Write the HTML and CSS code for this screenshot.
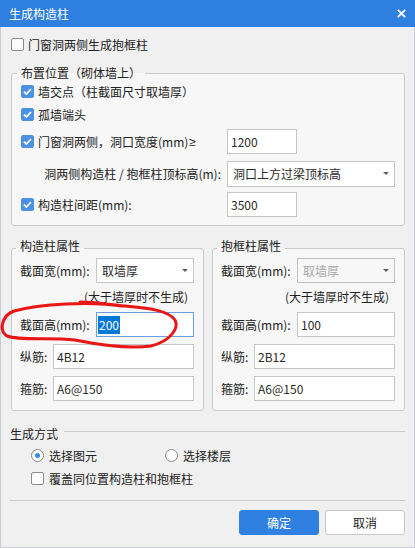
FILE: index.html
```html
<!DOCTYPE html>
<html>
<head>
<meta charset="utf-8">
<title>生成构造柱</title>
<link rel="stylesheet" href="styles.css">
</head>
<body>
<div class="win">
    <div class="titlebar">
        <span class="title">生成构造柱</span>
        <svg class="close" width="9" height="9" viewBox="0 0 9 9"><path d="M0.8 0.8 L8.2 8.2 M8.2 0.8 L0.8 8.2" stroke="#fff" stroke-width="1.8" fill="none"/></svg>
    </div>

    <div class="main">
        <div class="row"><span class="chk"></span>门窗洞两侧生成抱框柱</div>

        <fieldset class="group place">
            <legend>布置位置（砌体墙上）</legend>
            <div class="line">
                <span class="chk on"><svg width="11" height="11" viewBox="0 0 11 11"><path d="M2 5.6 L4.4 8 L9 3" stroke="#fff" stroke-width="1.8" fill="none"/></svg></span>墙交点（柱截面尺寸取墙厚）
            </div>
            <div class="line mt3">
                <span class="chk on"><svg width="11" height="11" viewBox="0 0 11 11"><path d="M2 5.6 L4.4 8 L9 3" stroke="#fff" stroke-width="1.8" fill="none"/></svg></span>孤墙端头
            </div>
            <div class="line tall mt5">
                <div class="lbl"><span class="chk on"><svg width="11" height="11" viewBox="0 0 11 11"><path d="M2 5.6 L4.4 8 L9 3" stroke="#fff" stroke-width="1.8" fill="none"/></svg></span>门窗洞两侧，洞口宽度(mm)<span class="ge">≥</span></div>
                <div class="field w70">1200</div>
            </div>
            <div class="line tall mt7">
                <div class="lbl right">洞两侧构造柱 / 抱框柱顶标高(m):</div>
                <div class="field select wide"><span>洞口上方过梁顶标高</span><i class="arrow"></i></div>
            </div>
            <div class="line tall mt6">
                <div class="lbl"><span class="chk on"><svg width="11" height="11" viewBox="0 0 11 11"><path d="M2 5.6 L4.4 8 L9 3" stroke="#fff" stroke-width="1.8" fill="none"/></svg></span>构造柱间距(mm):</div>
                <div class="field w70">3500</div>
            </div>
        </fieldset>

        <div class="pair">
            <fieldset class="group prop">
                <legend>构造柱属性</legend>
                <div class="prow">
                    <span class="plbl">截面宽(mm):</span>
                    <div class="field select"><span>取墙厚</span><i class="arrow"></i></div>
                </div>
                <div class="note">(大于墙厚时不生成)</div>
                <div class="prow mt5">
                    <span class="plbl">截面高(mm):</span>
                    <div class="field focus"><span class="sel">200</span></div>
                </div>
                <div class="prow mt7">
                    <span class="plbl short">纵筋:</span>
                    <div class="field">4B12</div>
                </div>
                <div class="prow mt7">
                    <span class="plbl short">箍筋:</span>
                    <div class="field">A6@150</div>
                </div>
            </fieldset>

            <fieldset class="group prop">
                <legend>抱框柱属性</legend>
                <div class="prow">
                    <span class="plbl">截面宽(mm):</span>
                    <div class="field select off"><span>取墙厚</span><i class="arrow"></i></div>
                </div>
                <div class="note">(大于墙厚时不生成)</div>
                <div class="prow mt5">
                    <span class="plbl">截面高(mm):</span>
                    <div class="field">100</div>
                </div>
                <div class="prow mt7">
                    <span class="plbl short">纵筋:</span>
                    <div class="field">2B12</div>
                </div>
                <div class="prow mt7">
                    <span class="plbl short">箍筋:</span>
                    <div class="field">A6@150</div>
                </div>
            </fieldset>
        </div>

        <div class="method">生成方式</div>
        <div class="radios">
            <span class="opt first"><span class="radio on"></span>选择图元</span>
            <span class="opt"><span class="radio"></span>选择楼层</span>
        </div>
        <div class="row cover"><span class="chk big"></span>覆盖同位置构造柱和抱框柱</div>

        <div class="sep"></div>
        <div class="btns">
            <div class="btn ok">确定</div>
            <div class="btn">取消</div>
        </div>
    </div>

    <!-- 红色手绘标注 -->
    <svg class="mark" width="415" height="548" viewBox="0 0 415 548">
        <path d="M122 306 C90 301, 40 304, 14 311 C1 316, -1 331, 7 336 C20 341, 50 337, 75 340 C100 345, 130 349, 151 346 C171 341, 179 328, 175 320 C169 311, 150 308, 125 306 C105 304, 95 302, 80 302" stroke="#ea1515" stroke-width="3" fill="none" stroke-linecap="round" stroke-linejoin="round"/>
    </svg>
</div>
</body>
</html>
```

FILE: styles.css
```css
* {
    margin: 0;
    padding: 0;
    box-sizing: border-box;
}

body {
    font-family: "Noto Sans CJK SC", "Microsoft YaHei", sans-serif;
    font-size: 12px;
    color: #222;
    background: #fff;
}

.win {
    position: relative;
    width: 415px;
    height: 548px;
    background: #f0f0f0;
    overflow: hidden;
}

.titlebar {
    height: 27px;
    background: #2e7fe0;
    color: #fff;
    display: flex;
    align-items: center;
    justify-content: space-between;
    padding: 0 9px;
}

.main {
    height: 521px;
    border: 1px solid #c5cbd4;
    border-top: 0;
    padding: 7px 9px 0 10px;
}

.row {
    display: flex;
    align-items: center;
    height: 20px;
}

.chk {
    flex: none;
    width: 13px;
    height: 13px;
    border: 1px solid #8c8c8c;
    border-radius: 2px;
    background: #fcfcfc;
    margin-right: 4px;
    display: flex;
    align-items: center;
    justify-content: center;
}

.chk.on {
    background: #4b92e4;
    border-color: #4b92e4;
}

.chk.big {
    margin-right: 5px;
}

.ge {
    font-family: "Liberation Sans", sans-serif;
    margin-left: 1px;
}

/* group boxes */
.group {
    border: 1px solid #cacaca;
    border-radius: 3px;
    background: #f7f7f7;
    min-width: 0;
}

.group legend {
    margin-left: -4px;
    padding: 0 4px;
    line-height: 16px;
}

.place {
    margin-top: 11px;
    padding: 0 9px 8px 9px;
}

.line {
    display: flex;
    align-items: center;
    height: 20px;
}

.line.tall {
    height: 25px;
}

.mt3 { margin-top: 3px }
.mt5 { margin-top: 5px }
.mt6 { margin-top: 6px }
.mt7 { margin-top: 7px }

.lbl {
    flex: none;
    width: 206px;
    display: flex;
    align-items: center;
}

.lbl.right {
    justify-content: flex-end;
    padding-right: 6px;
}

.field {
    height: 25px;
    background: #fff;
    border: 1px solid #c6c6c6;
    padding-left: 3px;
    display: flex;
    align-items: center;
    color: #2a2a2a;
}

.w70 {
    width: 70px;
}

.wide {
    width: 168px;
    height: 26px;
}

.select {
    padding-left: 5px;
    padding-right: 5px;
    justify-content: space-between;
}

.select.off {
    background: transparent;
    color: #a8a8a8;
    border-color: #c0c0c0;
}

.arrow {
    width: 0;
    height: 0;
    border-left: 3px solid transparent;
    border-right: 3px solid transparent;
    border-top: 3px solid #606060;
}

.field.focus {
    border-color: #6a9fe0;
    padding-left: 1px;
}

.sel {
    background: #0078d7;
    color: #fff;
    line-height: 18px;
    padding: 0 1px;
}

.pair {
    display: flex;
    gap: 8px;
    margin-top: 12px;
}

.prop {
    flex: 1;
    padding: 0 9px 9px 8px;
}

.prop legend {
    padding-bottom: 4px;
}

.prow {
    display: flex;
    align-items: center;
    height: 25px;
}

.prow .field {
    flex: 1;
}

.plbl {
    flex: none;
    width: 76px;
}

.plbl.short {
    width: 33px;
}

.note {
    margin-top: 4px;
    height: 20px;
    line-height: 20px;
    text-align: right;
    padding-right: 6px;
}

/* 生成方式 */
.method {
    margin-top: 12px;
    margin-left: -1px;
    height: 20px;
    display: flex;
    align-items: center;
}

.method:after {
    content: '';
    flex: 1;
    height: 1px;
    background: #cbcbcb;
    margin-left: 6px;
    margin-bottom: 3px;
}

.radios {
    margin-top: 2px;
    height: 20px;
    display: flex;
    align-items: center;
    padding-left: 20px;
}

.opt {
    display: flex;
    align-items: center;
}

.opt.first {
    width: 134px;
}

.radio {
    width: 13px;
    height: 13px;
    border: 1px solid #8a8a8a;
    border-radius: 50%;
    background: #fff;
    margin-right: 5px;
    display: flex;
    align-items: center;
    justify-content: center;
}

.radio.on:after {
    content: '';
    width: 5px;
    height: 5px;
    border-radius: 50%;
    background: #3d88e2;
}

.cover {
    margin-top: 3px;
    padding-left: 20px;
}

.sep {
    margin-top: 12px;
    margin-left: -1px;
    height: 1px;
    background: #cbcbcb;
}

.btns {
    margin-top: 9px;
    display: flex;
    justify-content: flex-end;
    gap: 6px;
}

.btn {
    width: 80px;
    height: 25px;
    border: 1px solid #c8c8c8;
    border-radius: 3px;
    background: #fff;
    display: flex;
    align-items: center;
    justify-content: center;
}

.btn.ok {
    background: #2f80e0;
    border-color: #2f80e0;
    color: #fff;
}

.mark {
    position: absolute;
    left: 0;
    top: 0;
    pointer-events: none;
}
```
